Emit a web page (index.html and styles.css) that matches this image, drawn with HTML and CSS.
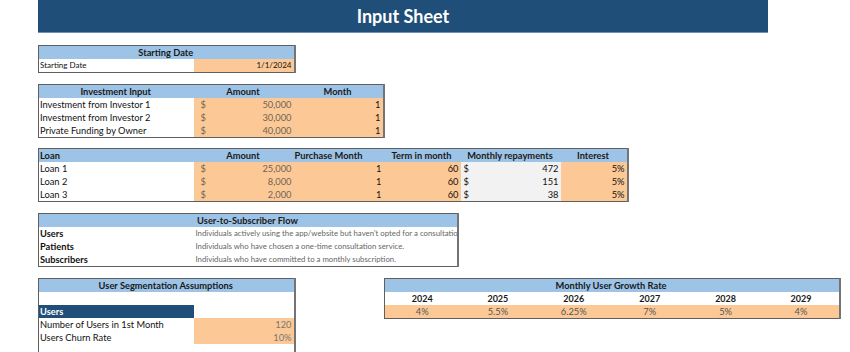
FILE: index.html
```html
<!DOCTYPE html>
<html>
<head>
<meta charset="utf-8">
<link rel="stylesheet" href="styles.css">
</head>
<body>
<div class="page">
  <div class="banner">Input Sheet</div>

  <table class="sheet w-start">
    <colgroup><col class="c-label"><col class="c-101"></colgroup>
    <tr class="hdr"><th colspan="2">Starting Date</th></tr>
    <tr class="small"><td>Starting Date</td><td class="org num dark">1/1/2024</td></tr>
  </table>

  <table class="sheet w-inv">
    <colgroup><col class="c-label"><col class="c-100"><col class="c-90"></colgroup>
    <tr class="hdr"><th>Investment Input</th><th>Amount</th><th>Month</th></tr>
    <tr><td>Investment from Investor 1</td><td class="org"><span class="cur"><span>$</span><span>50,000</span></span></td><td class="org num">1</td></tr>
    <tr><td>Investment from Investor 2</td><td class="org"><span class="cur"><span>$</span><span>30,000</span></span></td><td class="org num">1</td></tr>
    <tr><td>Private Funding by Owner</td><td class="org"><span class="cur"><span>$</span><span>40,000</span></span></td><td class="org num">1</td></tr>
  </table>

  <table class="sheet w-loan">
    <colgroup><col class="c-label"><col class="c-100"><col class="c-90"><col class="c-77"><col class="c-100"><col class="c-67"></colgroup>
    <tr class="hdr"><th class="left">Loan</th><th>Amount</th><th class="left">Purchase Month</th><th>Term in month</th><th>Monthly repayments</th><th>Interest</th></tr>
    <tr><td>Loan 1</td><td class="org"><span class="cur"><span>$</span><span>25,000</span></span></td><td class="org num">1</td><td class="org num">60</td><td class="gry"><span class="cur blk"><span>$</span><span>472</span></span></td><td class="org num">5%</td></tr>
    <tr><td>Loan 2</td><td class="org"><span class="cur"><span>$</span><span>8,000</span></span></td><td class="org num">1</td><td class="org num">60</td><td class="gry"><span class="cur blk"><span>$</span><span>151</span></span></td><td class="org num">5%</td></tr>
    <tr><td>Loan 3</td><td class="org"><span class="cur"><span>$</span><span>2,000</span></span></td><td class="org num">1</td><td class="org num">60</td><td class="gry"><span class="cur blk"><span>$</span><span>38</span></span></td><td class="org num">5%</td></tr>
  </table>

  <table class="sheet w-flow">
    <colgroup><col class="c-label"><col class="c-rest"></colgroup>
    <tr class="hdr"><th colspan="2">User-to-Subscriber Flow</th></tr>
    <tr><td class="bold">Users</td><td class="desc">Individuals actively using the app/website but haven't opted for a consultation.</td></tr>
    <tr><td class="bold">Patients</td><td class="desc">Individuals who have chosen a one-time consultation service.</td></tr>
    <tr><td class="bold">Subscribers</td><td class="desc">Individuals who have committed to a monthly subscription.</td></tr>
  </table>

  <div class="bottom">
    <table class="sheet w-start open">
      <colgroup><col class="c-label"><col class="c-101"></colgroup>
      <tr class="hdr"><th colspan="2">User Segmentation Assumptions</th></tr>
      <tr class="blank"><td></td><td></td></tr>
      <tr><td class="navy">Users</td><td></td></tr>
      <tr><td>Number of Users in 1st Month</td><td class="org num grey">120</td></tr>
      <tr><td>Users Churn Rate</td><td class="org num grey">10%</td></tr>
      <tr class="blank"><td></td><td></td></tr>
      <tr class="blank"><td></td><td></td></tr>
    </table>

    <table class="sheet w-growth">
      <colgroup><col><col><col><col><col><col></colgroup>
      <tr class="hdr"><th colspan="6">Monthly User Growth Rate</th></tr>
      <tr class="years"><td>2024</td><td>2025</td><td>2026</td><td>2027</td><td>2028</td><td>2029</td></tr>
      <tr class="vals"><td>4%</td><td>5.5%</td><td>6.25%</td><td>7%</td><td>5%</td><td>4%</td></tr>
    </table>
  </div>
</div>
</body>
</html>
```

FILE: styles.css
```css
* { box-sizing: border-box; }
html, body { margin: 0; padding: 0; background: #ffffff; }
body {
  font-family: Lato, "Liberation Sans", sans-serif;
  font-size: 9.3px;
  color: #111;
  overflow: hidden;
  height: 352px;
}
.page { padding-left: 38px; }

.banner {
  width: 730px;
  height: 33px;
  background: #1f4e79;
  border-bottom: 1px solid #6f8fb3;
  color: #fff;
  font-weight: 700;
  font-size: 18px;
  line-height: 32px;
  text-align: center;
}

.sheet {
  border-collapse: collapse;
  table-layout: fixed;
  border-top: 1px solid #5f5f5f;
  border-left: 1px solid #5f5f5f;
  border-right: 2px solid #747474;
  border-bottom: 1px solid #5f5f5f;
  margin-top: 11px;
}
.sheet td, .sheet th {
  padding: 0 2px 0 1px;
  height: 13px;
  line-height: 13px;
  white-space: nowrap;
  overflow: hidden;
  font-weight: 400;
}
.sheet th {
  background: #9dc3e6;
  font-weight: 700;
  color: #1a1a1a;
  text-align: center;
}
.sheet th.left { text-align: left; }

.w-start { width: 257px; margin-top: 12px; }
.w-inv { width: 346px; }
.w-loan { width: 590px; margin-top: 10px; }
.w-flow { width: 421px; }
.w-growth { width: 457px; margin-top: 0; }

.c-label { width: 155px; }
.c-101 { width: 101px; }
.c-100 { width: 100px; }
.c-90 { width: 90px; }
.c-77 { width: 77px; }
.c-67 { width: 67px; }

.small td { font-size: 8px; }
.org { background: #fcc996; }
.gry { background: #f2f2f2; }
.num { text-align: right; }
.dark { color: #111; }
.grey { color: #777; }

.cur {
  display: flex;
  justify-content: space-between;
  padding-left: 6px;
  color: #6e6457;
}
.cur.blk { color: #111; padding-left: 2px; }

.bold { font-weight: 700 !important; }
.desc {
  font-size: 7.8px;
  color: #666;
  padding-left: 2px !important;
}

.bottom {
  display: flex;
  align-items: flex-start;
  gap: 88px;
  margin-top: 11px;
}
.bottom .sheet { margin-top: 0; }
.open { border-bottom: none; }
.blank td { height: 13px; }
.navy {
  background: #1f4e79;
  color: #fff;
  font-weight: 700 !important;
}

.w-growth td { text-align: center; padding: 0; }
.years td { font-weight: 700; font-size: 9px; color: #1a1a1a; }
.vals td { background: #fcc996; color: #555; }
```
